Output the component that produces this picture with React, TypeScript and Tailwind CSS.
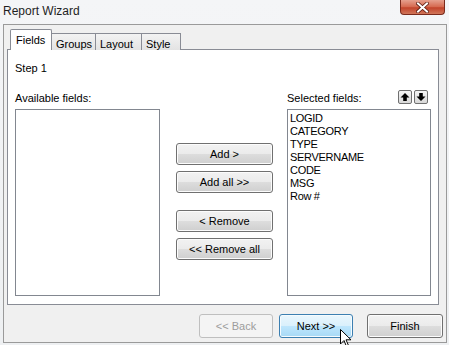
import React from "react";

const btn =
  "flex items-center justify-center border border-[#707070] rounded-[3px] bg-[linear-gradient(to_bottom,#f2f2f2_0%,#ebebeb_50%,#dddddd_51%,#cfcfcf_100%)] shadow-[inset_0_0_0_1px_#fcfcfc] text-[11px] text-black";

function ArrowBtn({ down }: { down?: boolean }) {
  return (
    <div className="w-[14px] h-[14px] border border-[#707070] rounded-[2px] bg-[linear-gradient(to_bottom,#f6f6f6,#d8d8d8)] flex items-center justify-center">
      <svg width="10" height="10" viewBox="0 0 10 10" style={{ transform: down ? "rotate(180deg)" : undefined }}>
        <path d="M5 1 L9.5 5.5 L6.8 5.5 L6.8 9 L3.2 9 L3.2 5.5 L0.5 5.5 Z" fill="#000" />
      </svg>
    </div>
  );
}

export default function App() {
  const fields = ["LOGID", "CATEGORY", "TYPE", "SERVERNAME", "CODE", "MSG", "Row #"];
  return (
    <div
      className="relative w-[449px] h-[345px] overflow-hidden bg-[linear-gradient(to_bottom,#f4f5f7,#eef0f2)] text-black"
      style={{ fontFamily: '"Liberation Sans", Arial, sans-serif' }}
    >
      {/* Title bar */}
      <div className="h-[24px] flex items-start justify-between">
        <div className="pl-[3px] pt-[4px] text-[12px] leading-[15px] text-[#1e1e1e]">Report Wizard</div>
        <div className="mr-[4px] w-[45px] h-[15px] rounded-b-[4px] border border-t-0 border-[#7a2a1c] bg-[linear-gradient(to_bottom,#e6a08e_0%,#d5684e_50%,#c2432a_55%,#d0765a_100%)] flex items-center justify-center">
          <svg width="13" height="11" viewBox="0 0 13 11">
            <path d="M2 1.5 L11 9.5 M11 1.5 L2 9.5" stroke="#5a1a10" strokeWidth="3.6" strokeLinecap="square" />
            <path d="M2 1.5 L11 9.5 M11 1.5 L2 9.5" stroke="#ffffff" strokeWidth="2" strokeLinecap="square" />
          </svg>
        </div>
      </div>

      {/* Dialog frame */}
      <div className="ml-[3px] w-[444px] h-[319px] border border-[#9a9a9a] bg-[#f0f0f0] pl-[3px] pr-[7px] pt-[4px] flex flex-col">
        {/* Tabs */}
        <div className="flex items-end h-[21px] pl-[3px] relative z-10">
          <div className="w-[42px] h-[21px] bg-white border border-b-0 border-[#898c95] rounded-t-[2px] text-[11px] pl-[5px] pt-[2px]">
            Fields
          </div>
          <div className="w-[44px] h-[17px] border border-l-0 border-b-0 border-[#898c95] bg-[linear-gradient(to_bottom,#f3f3f3,#e3e3e3)] text-[11px] pl-[4px] pt-[2px]">
            Groups
          </div>
          <div className="w-[46px] h-[17px] border border-l-0 border-b-0 border-[#898c95] bg-[linear-gradient(to_bottom,#f3f3f3,#e3e3e3)] text-[11px] pl-[4px] pt-[2px]">
            Layout
          </div>
          <div className="w-[39px] h-[17px] border border-l-0 border-b-0 border-[#898c95] bg-[linear-gradient(to_bottom,#f3f3f3,#e3e3e3)] text-[11px] pl-[4px] pt-[2px]">
            Style
          </div>
        </div>
        {/* Panel */}
        <div className="-mt-px w-[432px] h-[256px] border border-[#898c95] bg-white pl-[7px] pr-[6px] pt-[12px] flex flex-col">
          <div className="text-[11px] leading-[13px]">Step 1</div>
          <div className="mt-[17px] flex">
            <div className="w-[145px] flex flex-col">
              <div className="text-[11px] leading-[13px] h-[13px]">Available fields:</div>
              <div className="mt-[4px] h-[187px] border border-[#828790] bg-white" />
            </div>
            <div className="ml-[16px] w-[97px] flex flex-col pt-[51px]">
              <div className={`${btn} h-[22px]`}>Add &gt;</div>
              <div className={`${btn} h-[22px] mt-[6px]`}>Add all &gt;&gt;</div>
              <div className={`${btn} h-[22px] mt-[17px]`}>&lt; Remove</div>
              <div className={`${btn} h-[22px] mt-[6px]`}>&lt;&lt; Remove all</div>
            </div>
            <div className="ml-[14px] w-[144px] flex flex-col">
              <div className="h-[13px] flex items-center justify-between">
                <div className="text-[11px] leading-[13px]">Selected fields:</div>
                <div className="flex gap-[2px] mr-[3px] -mt-[3px]">
                  <ArrowBtn />
                  <ArrowBtn down />
                </div>
              </div>
              <div className="mt-[4px] h-[187px] border border-[#828790] bg-white pl-[2px] pt-[2px]">
                {fields.map((f) => (
                  <div key={f} className="text-[11px] leading-[13px] tracking-[-0.3px]">
                    {f}
                  </div>
                ))}
              </div>
            </div>
          </div>
        </div>
        {/* Bottom buttons */}
        <div className="mt-[9px] flex justify-end">
          <div className="w-[74px] h-[24px] flex items-center justify-center border border-[#bfbfbf] rounded-[3px] bg-[#f4f4f4] text-[11px] text-[#9c9c9c]">
            &lt;&lt; Back
          </div>
          <div className="ml-[6px] w-[74px] h-[24px] flex items-center justify-center border border-[#3c7fb1] rounded-[3px] bg-[linear-gradient(to_bottom,#eaf6fd_0%,#d9f0fc_50%,#bee6fd_51%,#a7d9f5_100%)] shadow-[inset_0_0_0_1px_#f5fbfe] text-[11px]">
            Next &gt;&gt;
          </div>
          <div className={`${btn} ml-[14px] w-[76px] h-[24px] -mr-[4px]`}>Finish</div>
        </div>
      </div>

      {/* Cursor */}
      <svg className="absolute left-[340px] top-[329px]" width="12" height="19" viewBox="0 0 12 19">
        <path d="M0.5 0.5 L0.5 15 L4 11.5 L6.5 17.5 L8.5 16.5 L6 10.8 L11 10.8 Z" fill="#fff" stroke="#000" strokeWidth="1" strokeLinejoin="miter" />
      </svg>
    </div>
  );
}
